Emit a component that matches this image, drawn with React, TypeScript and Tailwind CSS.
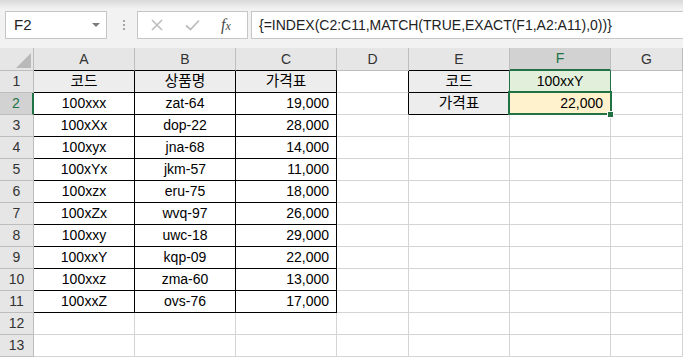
import React from "react";

const FONT = "font-['Liberation_Sans','Noto_Sans_CJK_KR',sans-serif]";

type RowData = string[];

const rows: RowData[] = [
  ["코드", "상품명", "가격표", "", "코드", "100xxY", ""],
  ["100xxx", "zat-64", "19,000", "", "가격표", "22,000", ""],
  ["100xXx", "dop-22", "28,000", "", "", "", ""],
  ["100xyx", "jna-68", "14,000", "", "", "", ""],
  ["100xYx", "jkm-57", "11,000", "", "", "", ""],
  ["100xzx", "eru-75", "18,000", "", "", "", ""],
  ["100xZx", "wvq-97", "26,000", "", "", "", ""],
  ["100xxy", "uwc-18", "29,000", "", "", "", ""],
  ["100xxY", "kqp-09", "22,000", "", "", "", ""],
  ["100xxz", "zma-60", "13,000", "", "", "", ""],
  ["100xxZ", "ovs-76", "17,000", "", "", "", ""],
  ["", "", "", "", "", "", ""],
  ["", "", "", "", "", "", ""],
];

const widths = [
  "w-[101px]",
  "w-[101px]",
  "w-[101px]",
  "w-[72px]",
  "w-[101px]",
  "w-[101px]",
  "flex-1",
];

const letters = ["A", "B", "C", "D", "E", "F", "G"];

function FormulaBar() {
  return (
    <div className="h-[48px] bg-[linear-gradient(to_bottom,#d9d9d9,#f2f2f2_9px,#f2f2f2)] flex items-start pt-[11px]">
      {/* Name box */}
      <div className="ml-[5px] w-[102px] h-[28px] bg-white border border-[#c6c6c6] flex items-center justify-between pl-[8px] pr-[6px]">
        <span className={`${FONT} text-[15px] text-[#222]`}>F2</span>
        <div className="w-0 h-0 border-l-[4px] border-r-[4px] border-t-[4px] border-l-transparent border-r-transparent border-t-[#7a7a7a]" />
      </div>
      {/* dots */}
      <div className="ml-[15px] w-[3px] h-[28px] flex flex-col items-center justify-center gap-[2px]">
        <div className="w-[2px] h-[2px] bg-[#a6a6a6]" />
        <div className="w-[2px] h-[2px] bg-[#a6a6a6]" />
        <div className="w-[2px] h-[2px] bg-[#a6a6a6]" />
      </div>
      {/* fx box */}
      <div className="ml-[12px] w-[111px] h-[28px] bg-white border border-[#c6c6c6] flex items-center">
        <svg width="12" height="12" viewBox="0 0 12 12" className="ml-[13px]">
          <path d="M1 1 L11 11 M11 1 L1 11" stroke="#bdbdbd" strokeWidth="1.6" fill="none" />
        </svg>
        <svg width="15" height="12" viewBox="0 0 15 12" className="ml-[22px]">
          <path d="M1 6.5 L5.5 10.5 L14 1.5" stroke="#bdbdbd" strokeWidth="1.8" fill="none" />
        </svg>
        <span className="ml-[21px] italic font-['Liberation_Serif',serif] text-[16px] text-[#4a4a4a] leading-none">
          f<span className="text-[12px]">x</span>
        </span>
      </div>
      {/* formula */}
      <div className="ml-[3px] flex-1 h-[28px] bg-white border border-[#c6c6c6] border-r-0 flex items-center pl-[7px]">
        <span className={`${FONT} text-[14px] text-[#222] whitespace-nowrap`}>
          {"{=INDEX(C2:C11,MATCH(TRUE,EXACT(F1,A2:A11),0))}"}
        </span>
      </div>
    </div>
  );
}

function HeaderRow() {
  return (
    <div className="flex h-[23px]">
      <div className="w-[34px] shrink-0 bg-[#e6e6e6] border-r border-b border-[#bdbdbd] relative">
        <svg width="15" height="15" viewBox="0 0 15 15" className="absolute left-[16px] top-[5px]">
          <path d="M15 0 L15 15 L0 15 Z" fill="#b9b9b9" />
        </svg>
      </div>
      {letters.map((l, i) => {
        const sel = i === 5;
        let bottom = "border-b border-b-[#bdbdbd]";
        if (i === 0 || i === 1 || i === 2 || i === 4) bottom = "border-b border-b-black";
        if (sel) bottom = "border-b-2 border-b-[#217346]";
        return (
          <div
            key={l}
            className={`${widths[i]} shrink-0 ${sel ? "bg-[#d2d2d2] text-[#217346]" : "bg-[#e6e6e6] text-[#333]"} border-r border-r-[#bdbdbd] ${bottom} flex items-center justify-center ${FONT} text-[14px]`}
          >
            {l}
          </div>
        );
      })}
    </div>
  );
}

function Cell({ r, c, v }: { r: number; c: number; v: string }) {
  const inTable = r >= 1 && r <= 11 && c <= 2;
  let right = "border-r-[#d4d4d4]";
  let bottom = "border-b-[#d4d4d4]";
  let bg = "bg-white";
  let align = "justify-center";
  if (inTable) {
    right = "border-r-black";
    bottom = "border-b-black";
    if (r === 1) bg = "bg-[#ededed]";
    if (c === 2 && r > 1) align = "justify-end pr-[7px]";
  }
  if (c === 3 && (r === 1 || r === 2)) right = "border-r-black";
  if (c === 4 && (r === 1 || r === 2)) {
    bg = "bg-[#ededed]";
    bottom = "border-b-black";
    right = "border-r-[#217346]";
  }
  if (c === 5 && r === 1) {
    bg = "bg-[#e2efda]";
    right = "border-r-[#217346]";
    bottom = "border-b-[#217346]";
  }
  if (c === 5 && r === 2) {
    bg = "bg-[#fff2cc]";
    align = "justify-end pr-[7px]";
  }
  const sel = c === 5 && r === 2;
  const korean = /[\uac00-\ud7a3]/.test(v);
  return (
    <div
      className={`${widths[c]} shrink-0 h-full border-r border-b ${right} ${bottom} ${bg} flex items-center ${align} ${FONT} ${korean ? "text-[14.7px]" : "text-[14px]"} text-black whitespace-nowrap ${sel ? "relative" : ""}`}
    >
      {v}
      {sel && (
        <>
          <div className="absolute -left-[2px] -top-[2px] w-[104px] h-[24px] border-2 border-[#217346] z-10" />
          <div className="absolute left-[97px] top-[18px] w-[7px] h-[7px] bg-[#217346] border border-white z-20" />
        </>
      )}
    </div>
  );
}

export default function App() {
  return (
    <div className="w-[683px] h-[357px] overflow-hidden bg-white select-none">
      <FormulaBar />
      <HeaderRow />
      {rows.map((row, ri) => {
        const r = ri + 1;
        const selRow = r === 2;
        return (
          <div key={r} className="flex h-[22px]">
            <div
              className={`w-[34px] shrink-0 border-b border-b-[#bdbdbd] ${selRow ? "bg-[#d2d2d2] text-[#217346] border-r-2 border-r-[#217346]" : "bg-[#e6e6e6] text-[#333] border-r border-r-[#bdbdbd]"} flex items-center justify-center ${FONT} text-[14px]`}
            >
              {r}
            </div>
            {row.map((v, ci) => (
              <Cell key={ci} r={r} c={ci} v={v} />
            ))}
          </div>
        );
      })}
    </div>
  );
}
